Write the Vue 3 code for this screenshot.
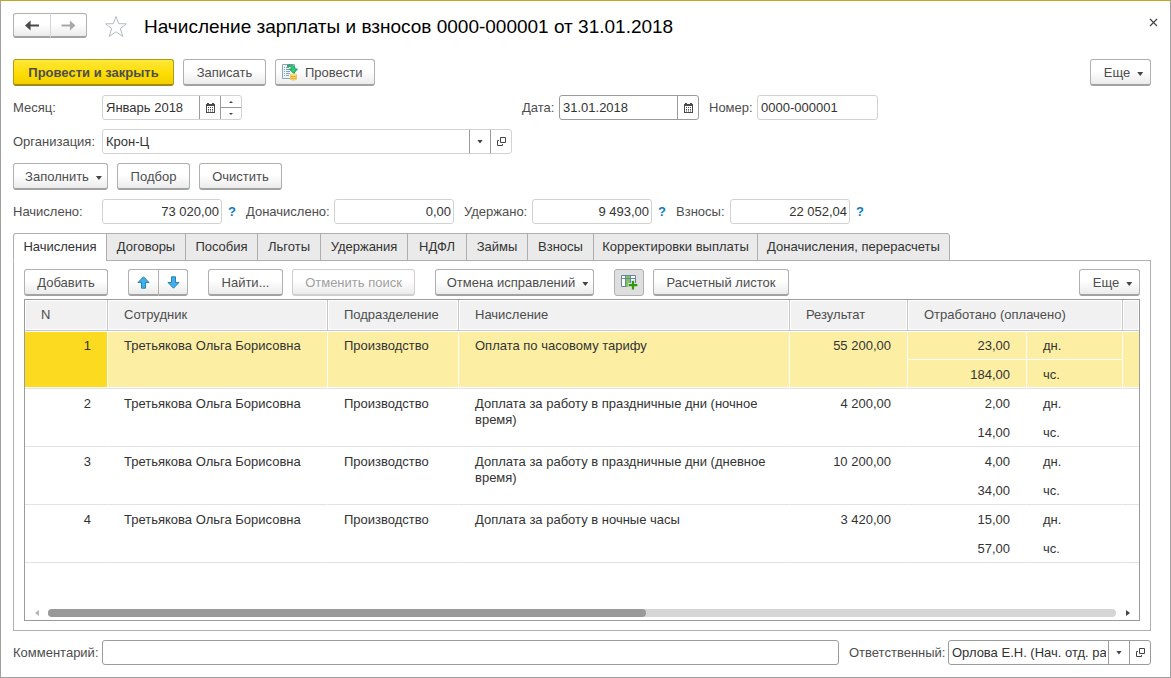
<script setup>
import { ref } from 'vue'

const month = ref('Январь 2018')
const date = ref('31.01.2018')
const number = ref('0000-000001')
const organization = ref('Крон-Ц')
const comment = ref('')
const responsible = ref('Орлова Е.Н. (Нач. отд. ра')

const totals = ref([
  { id: 'accrued', label: 'Начислено:', value: '73 020,00', help: true },
  { id: 'additional', label: 'Доначислено:', value: '0,00', help: false },
  { id: 'withheld', label: 'Удержано:', value: '9 493,00', help: true },
  { id: 'contrib', label: 'Взносы:', value: '22 052,04', help: true },
])

const tabs = [
  { id: 'accruals', title: 'Начисления' },
  { id: 'contracts', title: 'Договоры' },
  { id: 'allowances', title: 'Пособия' },
  { id: 'benefits', title: 'Льготы' },
  { id: 'deductions', title: 'Удержания' },
  { id: 'ndfl', title: 'НДФЛ' },
  { id: 'loans', title: 'Займы' },
  { id: 'contributions', title: 'Взносы' },
  { id: 'corrections', title: 'Корректировки выплаты' },
  { id: 'recalcs', title: 'Доначисления, перерасчеты' },
]
const activeTab = ref('accruals')

const rows = [
  { n: 1, employee: 'Третьякова Ольга Борисовна', unit: 'Производство', kind: 'Оплата по часовому тарифу', result: '55 200,00', days: '23,00', hours: '184,00' },
  { n: 2, employee: 'Третьякова Ольга Борисовна', unit: 'Производство', kind: 'Доплата за работу в праздничные дни (ночное время)', result: '4 200,00', days: '2,00', hours: '14,00' },
  { n: 3, employee: 'Третьякова Ольга Борисовна', unit: 'Производство', kind: 'Доплата за работу в праздничные дни (дневное время)', result: '10 200,00', days: '4,00', hours: '34,00' },
  { n: 4, employee: 'Третьякова Ольга Борисовна', unit: 'Производство', kind: 'Доплата за работу в ночные часы', result: '3 420,00', days: '15,00', hours: '57,00' },
]
const selected = ref(1)
</script>

<template>
  <main class="window">
    <header class="header">
      <div class="nav">
        <button class="btn nav-btn" type="button" aria-label="Назад">
          <svg width="15" height="11" viewBox="0 0 15 11"><path d="M0 5.500 5.600.5v3.900H14v2.200H5.600v3.900z" fill="#4a4a4a" /></svg>
        </button>
        <button class="btn nav-btn" type="button" aria-label="Вперед">
          <svg width="15" height="11" viewBox="0 0 15 11"><path d="M14.500 5.500 8.900.5v3.900H.5v2.200h8.400v3.900z" fill="#a9a9a9" /></svg>
        </button>
      </div>
      <button class="plain star" type="button" aria-label="В избранное">
        <svg width="24" height="23" viewBox="0 0 24 23"><path d="M12 1.500 14.700 8.700 22.500 8.800 16.300 13.600 18.800 21.500 12 16.800 5.200 21.500 7.700 13.600 1.500 8.800 9.300 8.700z" fill="#fff" stroke="#b4bcc2" /></svg>
      </button>
      <h1>Начисление зарплаты и взносов 0000-000001 от 31.01.2018</h1>
      <button class="plain close" type="button" aria-label="Закрыть">
        <svg width="9" height="9" viewBox="0 0 9 9"><path d="M1 1l7 7M8 1L1 8" stroke="#444" stroke-width="1.200" /></svg>
      </button>
    </header>

    <div class="bar">
      <button class="btn primary w-post-close" type="button">Провести и закрыть</button>
      <button class="btn w-write" type="button">Записать</button>
      <button class="btn w-post" type="button">
        <svg class="post-icon" width="16" height="17" viewBox="0 0 16 17">
          <path d="M.5.5h12v14H.5z" fill="#eef4f8" stroke="#8fa5b5" />
          <path d="M2 3.500h1M4 3.500h3M2 5.500h1M4 5.500h5M2 7.500h1M4 7.500h4M2 9.500h1M4 9.500h4M2 11.500h1M4 11.500h3" stroke="#86a0b3" />
          <path d="M5.500 1.200c4.500-.8 7.300.3 7.700 3.800h2.300L11.600 9.500 7.500 5h2.300c-.2-1.800-1.500-2.700-4.300-2.300z" fill="#26d07c" stroke="#128a4b" stroke-width=".8" />
          <path d="M8 10.500v4.800c1.800 1.500 5.200 1.500 7 0v-4.800z" fill="#e3ae2c" />
          <ellipse cx="11.500" cy="10.700" rx="3.500" ry="1.300" fill="#f9dc78" />
          <path d="M8 12.800c1.800 1.200 5.200 1.200 7 0M8 14.800c1.800 1.200 5.200 1.200 7 0" fill="none" stroke="#fbe694" stroke-width=".8" />
        </svg>
        <span>Провести</span>
      </button>
      <button class="btn more push" type="button">Еще<i class="caret"></i></button>
    </div>

    <div class="line">
      <div class="month-cell">
        <label class="lead" for="month">Месяц:</label>
        <div class="field month">
          <input id="month" v-model="month" type="text" />
          <button type="button" class="part" aria-label="Выбрать месяц">
            <svg width="9" height="10" viewBox="0 0 9 10"><path d="M0 1h1V0h2v1h3V0h2v1h1v9H0z" fill="#4a4a4a" /><path d="M1 3h7v6H1z" fill="#fff" /><path d="M2 4.500h5M2 6.500h5M2 8h5" stroke="#4a4a4a" stroke-dasharray="1 1" /></svg>
          </button>
          <div class="spin">
            <button type="button" aria-label="Следующий месяц"><svg width="4" height="2" viewBox="0 0 4 2"><path d="M0 2h4L2 0z" fill="#444" /></svg></button>
            <button type="button" aria-label="Предыдущий месяц"><svg width="4" height="2" viewBox="0 0 4 2"><path d="M0 0h4L2 2z" fill="#444" /></svg></button>
          </div>
        </div>
      </div>
      <label class="date-label" for="date">Дата:</label>
      <div class="field strong date">
        <input id="date" v-model="date" type="text" />
        <button type="button" class="part" aria-label="Выбрать дату">
          <svg width="9" height="10" viewBox="0 0 9 10"><path d="M0 1h1V0h2v1h3V0h2v1h1v9H0z" fill="#4a4a4a" /><path d="M1 3h7v6H1z" fill="#fff" /><path d="M2 4.500h5M2 6.500h5M2 8h5" stroke="#4a4a4a" stroke-dasharray="1 1" /></svg>
        </button>
      </div>
      <label class="number-label" for="number">Номер:</label>
      <div class="field number"><input id="number" v-model="number" type="text" /></div>
    </div>

    <div class="line">
      <label class="lead" for="org">Организация:</label>
      <div class="field org">
        <input id="org" v-model="organization" type="text" />
        <button type="button" class="part" aria-label="Выбрать организацию"><i class="caret"></i></button>
        <button type="button" class="part" aria-label="Открыть организацию">
          <svg width="9" height="9" viewBox="0 0 9 9"><path d="M3.500.5h5v5h-5zM2 3.500H.5v5h5V7" fill="none" stroke="#444" /></svg>
        </button>
      </div>
    </div>

    <div class="bar">
      <button class="btn w-fill" type="button">Заполнить<i class="caret"></i></button>
      <button class="btn w-pick" type="button">Подбор</button>
      <button class="btn w-write" type="button">Очистить</button>
    </div>

    <div class="line">
      <div v-for="t in totals" :key="t.id" class="total" :class="t.id">
        <label :for="t.id">{{ t.label }}</label>
        <div class="field"><input :id="t.id" v-model="t.value" type="text" readonly /></div>
        <button v-if="t.help" class="plain help" type="button">?</button>
      </div>
    </div>

    <div class="tabs" role="tablist">
      <button
        v-for="t in tabs" :key="t.id" type="button" role="tab" class="tab"
        :class="[t.id, { active: t.id === activeTab }]" :aria-selected="t.id === activeTab"
        @click="activeTab = t.id"
      >{{ t.title }}</button>
    </div>

    <section class="panel">
      <div class="bar tools">
        <button class="btn w-add" type="button">Добавить</button>
        <div class="move">
          <button class="btn" type="button" aria-label="Вверх">
            <svg width="13" height="13" viewBox="0 0 13 13"><path d="M6.500.8 12 6.500H8.500v5.700h-4V6.500H1z" fill="#3fb0ee" stroke="#2a81b2" /></svg>
          </button>
          <button class="btn" type="button" aria-label="Вниз">
            <svg width="13" height="13" viewBox="0 0 13 13"><path d="M6.500 12.200 12 6.500H8.500V.8h-4v5.700H1z" fill="#3fb0ee" stroke="#2a81b2" /></svg>
          </button>
        </div>
        <button class="btn w-find" type="button">Найти...</button>
        <button class="btn w-cancel" type="button" disabled>Отменить поиск</button>
        <button class="btn w-undo" type="button">Отмена исправлений<i class="caret"></i></button>
        <button class="btn pressed" type="button" aria-label="Показать подробно">
          <svg width="17" height="15" viewBox="0 0 17 15">
            <path d="M.5.5h14v11H.5z" fill="#fff" stroke="#66869b" />
            <path d="M5 1h4v11H5z" fill="#7cc465" />
            <path d="M1 3.500h13M4.500 0v12M9.500 0v12" stroke="#66869b" />
            <path d="M12 5v10M7 10h10" stroke="#dedede" stroke-width="4" />
            <path d="M12 6v8.500M7.700 10.200h8.600" stroke="#2e9a0b" stroke-width="2.200" />
          </svg>
        </button>
        <button class="btn w-slip" type="button">Расчетный листок</button>
        <button class="btn more push" type="button">Еще<i class="caret"></i></button>
      </div>

      <div class="grid">
        <table>
          <colgroup>
            <col class="c-n" /><col class="c-emp" /><col class="c-unit" /><col />
            <col class="c-res" /><col class="c-qty" /><col class="c-uom" /><col class="c-end" />
          </colgroup>
          <thead>
            <tr>
              <th>N</th><th>Сотрудник</th><th>Подразделение</th><th>Начисление</th>
              <th>Результат</th><th colspan="2">Отработано (оплачено)</th><th class="end"></th>
            </tr>
          </thead>
          <tbody v-for="r in rows" :key="r.n" :class="{ selected: r.n === selected }" @click="selected = r.n">
            <tr>
              <td rowspan="2" class="num first">{{ r.n }}</td>
              <td rowspan="2">{{ r.employee }}</td>
              <td rowspan="2">{{ r.unit }}</td>
              <td rowspan="2">{{ r.kind }}</td>
              <td rowspan="2" class="num">{{ r.result }}</td>
              <td class="num half">{{ r.days }}</td>
              <td class="half">дн.</td>
              <td rowspan="2" class="end"></td>
            </tr>
            <tr>
              <td class="num">{{ r.hours }}</td>
              <td>чс.</td>
            </tr>
          </tbody>
        </table>
        <div class="scroll">
          <button class="plain" type="button" aria-label="Прокрутить влево"><svg width="4" height="6" viewBox="0 0 4 6"><path d="M4 0v6L0 3z" fill="#b5b5b5" /></svg></button>
          <div class="track"><div class="thumb"></div></div>
          <button class="plain" type="button" aria-label="Прокрутить вправо"><svg width="4" height="6" viewBox="0 0 4 6"><path d="M0 0v6L4 3z" fill="#444" /></svg></button>
        </div>
      </div>
    </section>

    <footer class="line footer">
      <label class="lead" for="comment">Комментарий:</label>
      <div class="field strong comment"><input id="comment" v-model="comment" type="text" /></div>
      <label class="resp-label" for="resp">Ответственный:</label>
      <div class="field strong resp">
        <input id="resp" v-model="responsible" type="text" />
        <button type="button" class="part" aria-label="Выбрать ответственного"><i class="caret"></i></button>
        <button type="button" class="part" aria-label="Открыть ответственного">
          <svg width="9" height="9" viewBox="0 0 9 9"><path d="M3.500.5h5v5h-5zM2 3.500H.5v5h5V7" fill="none" stroke="#444" /></svg>
        </button>
      </div>
    </footer>
  </main>
</template>

<style>
body {
  background: #fff;
}
</style>

<style scoped>
* {
  box-sizing: border-box;
}
.window {
  min-height: 100vh;
  display: flex;
  flex-direction: column;
  padding: 12px 19px 12px 12px;
  border: 1px solid #a0a0a0;
  border-top-color: #c4a51c;
  background: #fff;
  color: #4d4d4d;
  font: 13px/16px "Liberation Sans", Arial, sans-serif;
}
button,
input {
  font: inherit;
  color: inherit;
}
button {
  padding: 0;
  white-space: nowrap;
}
svg {
  display: block;
  flex: none;
}
.plain {
  display: flex;
  align-items: center;
  justify-content: center;
  border: 0;
  background: none;
}

.header {
  display: flex;
  align-items: center;
  height: 25px;
  margin-bottom: 21px;
}
.nav,
.move {
  display: flex;
}
.nav > .btn:first-child,
.move > .btn:first-child {
  border-right: 0;
  border-radius: 3px 0 0 3px;
}
.nav > .btn:last-child,
.move > .btn:last-child {
  border-radius: 0 3px 3px 0;
}
.nav > .btn:last-child {
  border-left-color: #d5d5d5;
}
.nav-btn.btn {
  width: 37px;
  height: 25px;
}
.star {
  width: 24px;
  margin: 2px 16px 0 17px;
}
h1 {
  flex: 1;
  margin: 2px 0 0;
  color: #000;
  font-size: 19px;
  font-weight: 400;
  line-height: 24px;
  white-space: nowrap;
}
.close {
  align-self: flex-start;
  width: 11px;
  height: 19px;
  margin-right: -8px;
}

.bar {
  display: flex;
  gap: 9px;
  margin-bottom: 9px;
}
.push {
  margin-left: auto;
}
.btn {
  display: flex;
  align-items: center;
  justify-content: center;
  height: 27px;
  padding-top: 2px;
  border: 1px solid #b0b0b0;
  border-bottom: 2px solid #a2a2a2;
  border-radius: 3px;
  background: linear-gradient(#fff 45%, #ebebeb);
}
.btn:disabled {
  border-color: #cfcfcf;
  color: #a0a0a0;
}
.primary {
  border-color: #b39b12;
  border-bottom-color: #a08a10;
  background: linear-gradient(#ffe83a, #fddc00 60%, #f2cf00);
  font-weight: 700;
}
.nav .btn,
.move .btn {
  padding-top: 0;
}
.pressed {
  width: 30px;
  padding-top: 0;
  background: #dedede;
  border-bottom: 1px solid #b0b0b0;
}
.caret {
  flex: none;
  width: 6px;
  height: 4px;
  background: #444;
  clip-path: polygon(0 0, 100% 0, 50% 100%);
}
.btn .caret {
  margin: 2px 0 0 7px;
}
.w-post-close { width: 161px; }
.w-write { width: 83px; }
.w-post { width: 100px; justify-content: flex-start; padding: 0 0 0 6px; }
.w-post span { padding-top: 2px; }
.post-icon { margin-right: 7px; }
.more { width: 61px; padding-left: 6px; }
.w-fill { width: 95px; padding-left: 6px; }
.w-pick { width: 73px; }
.w-add { width: 84px; }
.w-find { width: 75px; }
.w-cancel { width: 123px; }
.w-undo { width: 159px; padding-left: 6px; }
.w-slip { width: 136px; }

.line {
  display: flex;
  align-items: center;
  margin-bottom: 9px;
}
.line label {
  flex: none;
  white-space: nowrap;
}
.lead {
  width: 89px;
}
.month-cell {
  display: flex;
  align-items: center;
  width: 509px;
}
.field {
  display: flex;
  height: 25px;
  border: 1px solid #d2d2d2;
  border-radius: 3px;
  background: #fff;
  color: #333;
}
.field.strong {
  border-color: #9b9b9b;
}
.field input {
  flex: 1;
  min-width: 0;
  width: 0;
  padding: 0 2px 0 3px;
  border: 0;
  outline: 0;
  background: none;
}
.part {
  display: flex;
  flex: none;
  align-items: center;
  justify-content: center;
  width: 21px;
  border: 0;
  border-left: 1px solid #9b9b9b;
  background: none;
}
.spin {
  display: flex;
  flex-direction: column;
  width: 21px;
  border-left: 1px solid #9b9b9b;
}
.spin button {
  display: flex;
  flex: 1;
  align-items: center;
  justify-content: center;
  border: 0;
  background: none;
}
.spin button + button {
  border-top: 1px solid #9b9b9b;
}
.month,
.date {
  width: 140px;
}
.date-label {
  width: 37px;
}
.number-label {
  width: 48px;
  margin-left: 10px;
}
.number {
  width: 121px;
}
.org {
  width: 410px;
}

.total {
  display: flex;
  align-items: center;
}
.total .field {
  width: 120px;
}
.total input {
  text-align: right;
}
.help {
  width: 24px;
  padding-right: 4px;
  color: #0a7cc4;
  font-weight: 700;
}
.accrued label { width: 89px; }
.additional label { width: 88px; }
.additional { margin-right: 10px; }
.withheld label { width: 68px; }
.contrib label { width: 54px; }

.tabs {
  display: flex;
  position: relative;
  margin-bottom: -1px;
}
.tab {
  height: 28px;
  margin-left: -1px;
  border: 1px solid #aeaeae;
  background: #eaeaea;
  color: #333;
}
.tab.active {
  margin-left: 0;
  border-bottom-color: #fff;
  border-radius: 3px 0 0 0;
  background: #fff;
}
.tab:last-child {
  border-radius: 0 3px 0 0;
}
.tab.accruals { width: 94px; }
.tab.contracts { width: 80px; }
.tab.allowances { width: 73px; }
.tab.benefits { width: 64px; }
.tab.deductions { width: 88px; }
.tab.ndfl { width: 60px; }
.tab.loans { width: 62px; }
.tab.contributions { width: 67px; }
.tab.corrections { width: 165px; }
.tab.recalcs { width: 193px; }

.panel {
  display: flex;
  flex: 1;
  flex-direction: column;
  margin-bottom: 9px;
  padding: 8px 10px 9px;
  border: 1px solid #b0b0b0;
}
.tools {
  gap: 0;
  margin-bottom: 3px;
}
.move {
  margin: 0 20px;
}
.move .btn {
  width: 30px;
}
.w-cancel {
  margin: 0 20px 0 9px;
}
.pressed {
  margin: 0 9px 0 20px;
}
.grid {
  display: flex;
  flex: 1;
  flex-direction: column;
  border: 1px solid #9b9b9b;
}
table {
  width: 100%;
  table-layout: fixed;
  border-collapse: separate;
  border-spacing: 0;
}
.c-n { width: 83px; }
.c-emp { width: 220px; }
.c-unit { width: 131px; }
.c-res { width: 118px; }
.c-qty { width: 119px; }
.c-uom { width: 96px; }
.c-end { width: 16px; }
th {
  height: 31px;
  padding: 0 15px 0 16px;
  border-right: 1px solid #c6c6c6;
  border-bottom: 1px solid #c6c6c6;
  background: #f1f1f1;
  box-shadow: inset 0 0 0 1px #fff;
  font-weight: 400;
  text-align: left;
  white-space: nowrap;
}
td {
  height: 29px;
  padding: 7px 15px 0 16px;
  border-right: 1px solid #fff;
  border-bottom: 1px solid #e2e2e2;
  color: #333;
  vertical-align: top;
}
td.half {
  border-bottom-color: #fff;
}
.num {
  padding-right: 16px;
  text-align: right;
}
th.end,
td.end {
  padding: 0;
  border-right: 0;
}
.selected td {
  background: #fcefa4;
  box-shadow: inset 0 -1px #fff;
}
.selected tr:first-child td {
  box-shadow: inset 0 1px #fff, inset 0 -1px #fff;
}
.selected tr:first-child td.half {
  box-shadow: inset 0 1px #fff;
}
.selected td.first {
  background: #fcda20;
}

.scroll {
  display: flex;
  align-items: center;
  height: 8px;
  margin-top: auto;
  margin-bottom: 3px;
}
.scroll .plain {
  width: 23px;
}
.track {
  flex: 1;
  height: 8px;
  border-radius: 4px;
  background: #d5d5d5;
}
.thumb {
  width: 56%;
  height: 8px;
  border-radius: 4px;
  background: #999;
}

.footer {
  margin-bottom: 0;
}
.comment {
  flex: 1;
}
.resp-label {
  width: 99px;
  margin-left: 10px;
}
.resp {
  width: 203px;
}
</style>
